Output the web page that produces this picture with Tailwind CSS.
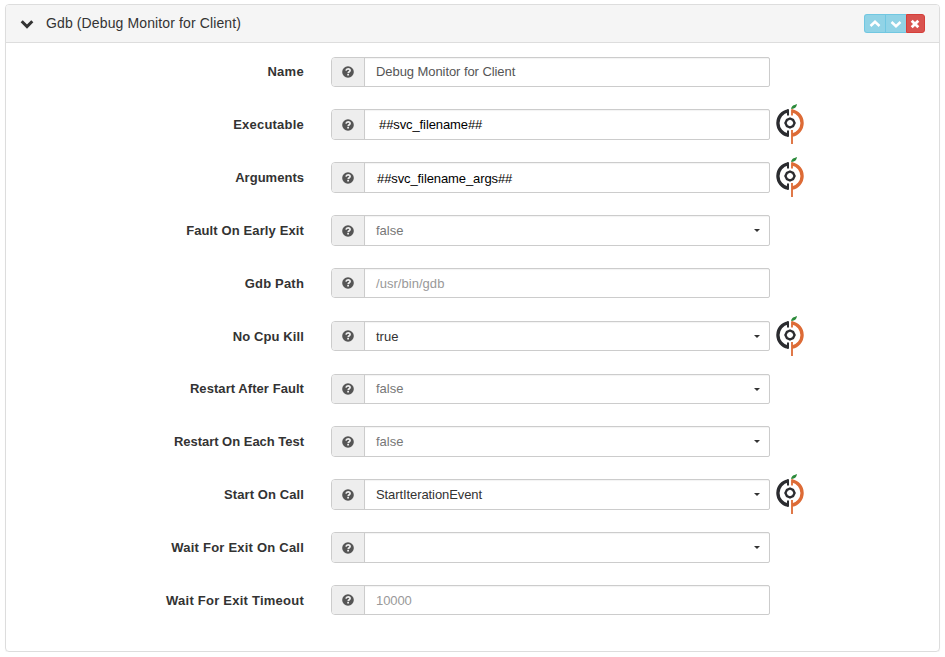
<!DOCTYPE html>
<html lang="en">
<head>
<meta charset="utf-8">
<title>Gdb (Debug Monitor for Client)</title>
<script src="https://cdn.jsdelivr.net/npm/@tailwindcss/browser@4"></script>
</head>
<body class="bg-white font-['Liberation_Sans',Arial,sans-serif] text-[#333]">
<svg class="hidden">
  <symbol id="help" viewBox="0 0 12 12">
    <circle cx="6" cy="6" r="5.8" fill="#555"/>
    <path d="M4 4.7C4.200 3.300 5 2.800 6.100 2.800c1.200 0 2 .7 2 1.700 0 1.300-1.900 1.300-1.900 2.700" fill="none" stroke="#eee" stroke-width="1.700"/>
    <path d="M5.200 8h1.800v1.600H5.200z" fill="#eee"/>
  </symbol>
  <symbol id="peach" viewBox="0 0 30 42">
    <path d="M13 6.900A12.300 12.300 0 0 0 13 31.100" fill="none" stroke="#2b2c30" stroke-width="3.300"/>
    <path d="M13 5.200v6.300M13 26.500v6.300" fill="none" stroke="#2b2c30" stroke-width="2"/>
    <path d="M17 5.200v6.300M17 26v14" fill="none" stroke="#dd6b36" stroke-width="1.800"/>
    <path d="M17 6.900A12.300 12.300 0 0 1 17 31.100" fill="none" stroke="#dd6b36" stroke-width="3.300"/>
    <path d="m10.400 19 1.600-3.200L15 14.500l3 1.300 1.600 3.200-1.600 3.200-3 1.300-3-1.300z" fill="none" stroke="#2b2c30" stroke-width="2.400" stroke-linejoin="round"/>
    <path d="M16.200 5C16.200 2 18.500 1.300 22 0 21.500 1.500 21.500 4.800 16.200 5z" fill="#2b8a3a"/>
  </symbol>
</svg>
<main class="mt-1 ml-[5px] flex h-[648px] w-[935px] flex-col rounded border border-[#ddd] shadow-[0_1px_1px_rgba(0,0,0,0.05)]">
  <header class="flex h-[38px] shrink-0 items-center rounded-t-[3px] border-b border-[#ddd] bg-[#f5f5f5] pr-3.5 pl-[14px]">
    <svg class="h-3.5 w-3.5" viewBox="0 0 14 14"><path d="M1.700 4.300 7 9.600l5.300-5.300" fill="none" stroke="#333" stroke-width="3"/></svg>
    <h1 class="ml-3 flex-1 pb-0.5 text-sm tracking-[0.12px] whitespace-nowrap">Gdb (Debug Monitor for Client)</h1>
    <div class="flex h-[19px]">
      <button class="flex w-[22px] items-center justify-center rounded-l-[3px] border border-[#5bc0de]/60 bg-[#91d3e6]"><svg class="h-3 w-3" viewBox="0 0 12 12"><path d="M1.500 8 6 3.800 10.500 8" fill="none" stroke="#fff" stroke-width="2.500"/></svg></button>
      <button class="flex w-5 items-center justify-center border-y border-[#5bc0de]/60 bg-[#91d3e6]"><svg class="h-3 w-3" viewBox="0 0 12 12"><path d="M1.500 4 6 8.200 10.500 4" fill="none" stroke="#fff" stroke-width="2.500"/></svg></button>
      <button class="flex w-[19px] items-center justify-center rounded-r-[3px] border border-[#d43f3a] bg-[#d9534f] pr-px"><svg class="h-3 w-3" viewBox="0 0 12 12"><path d="m2.700 2.700 6.600 6.600m0-6.600L2.700 9.300" fill="none" stroke="#fff" stroke-width="2.800"/></svg></button>
    </div>
  </header>
  <form id="fields" class="flex flex-col pt-[14px] text-[13px]"></form>
</main>
<script>
const fields = [
  { label: 'Name', name: 'pt-[5px] tracking-[0.3px]', value: 'Debug Monitor for Client', style: 'pl-[11px] text-[#555] tracking-[-0.07px]', row: 'h-[52px]', box: 'h-[30px]' },
  { label: 'Executable', name: 'pt-[6px] tracking-[0.22px]', value: '##svc_filename##', style: 'pl-[14px] pt-px text-black tracking-[-0.1px]', row: 'h-[53px]', box: 'h-[31px]', logo: true },
  { label: 'Arguments', name: 'pt-[6px] tracking-[0.02px]', value: '##svc_filename_args##', style: 'pl-[12px] pt-[3px] text-black tracking-[-0.1px]', row: 'h-[53px]', box: 'h-[31px]', logo: true },
  { label: 'Fault On Early Exit', name: 'pt-[6px] tracking-[0.12px]', value: 'false', style: 'pl-[11px] text-[#777]', row: 'h-[53px]', box: 'h-[31px]', caret: true },
  { label: 'Gdb Path', name: 'pt-[6px] tracking-[0.18px]', value: '/usr/bin/gdb', style: 'pl-[11px] pt-[2px] text-[#999] tracking-[0.04px]', row: 'h-[53px]', box: 'h-[30px]' },
  { label: 'No Cpu Kill', name: 'pt-[6px] tracking-[0.1px]', value: 'true', style: 'pl-[11px] pt-px text-[#333]', row: 'h-[53px]', box: 'h-[30px]', caret: true, logo: true },
  { label: 'Restart After Fault', name: 'pt-[5px] tracking-[0.06px]', value: 'false', style: 'pl-[11px] text-[#777]', row: 'h-[52px]', box: 'h-[30px]', caret: true },
  { label: 'Restart On Each Test', name: 'pt-[6px] tracking-[-0.02px]', value: 'false', style: 'pl-[11px] text-[#777]', row: 'h-[53px]', box: 'h-[31px]', caret: true },
  { label: 'Start On Call', name: 'pt-[6px] tracking-[0.1px]', value: 'StartIterationEvent', style: 'pl-[11px] text-[#333] tracking-[-0.09px]', row: 'h-[53px]', box: 'h-[31px]', caret: true, logo: true },
  { label: 'Wait For Exit On Call', name: 'pt-[6px] tracking-[0.22px]', value: '', style: 'pl-[11px]', row: 'h-[53px]', box: 'h-[31px]', caret: true },
  { label: 'Wait For Exit Timeout', name: 'pt-[6px] tracking-[0.24px]', value: '10000', style: 'pl-[11px] pt-[2px] text-[#999] tracking-[-0.1px]', row: 'h-[53px]', box: 'h-[30px]' },
];
document.getElementById('fields').innerHTML = fields.map(f => `
  <div class="flex items-start ${f.row}">
    <label class="w-[298px] text-right font-bold leading-5 whitespace-nowrap ${f.name}">${f.label}</label>
    <div class="ml-[27px] flex w-[439px] rounded-l-[4px] rounded-r-[2px] border border-[#ccc] ${f.box}">
      <span class="flex w-8 shrink-0 items-center justify-center rounded-l-[3px] bg-[#eee]"><svg class="h-3 w-3"><use href="#help"/></svg></span>
      <div class="flex flex-1 items-center border-l border-[#ccc] shadow-[inset_0_1px_1px_rgba(0,0,0,0.05)]">
        <span class="flex-1 leading-5 ${f.style}">${f.value}</span>
        ${f.caret ? '<svg class="mr-[9px] h-[3px] w-[6px]" viewBox="0 0 6 3"><path d="M0 0h6L3 3z" fill="#333"/></svg>' : ''}
      </div>
    </div>
    ${f.logo ? '<svg class="-mt-[5px] ml-[5px] h-[42px] w-[30px]"><use href="#peach"/></svg>' : ''}
  </div>`).join('');
</script>
</body>
</html>
